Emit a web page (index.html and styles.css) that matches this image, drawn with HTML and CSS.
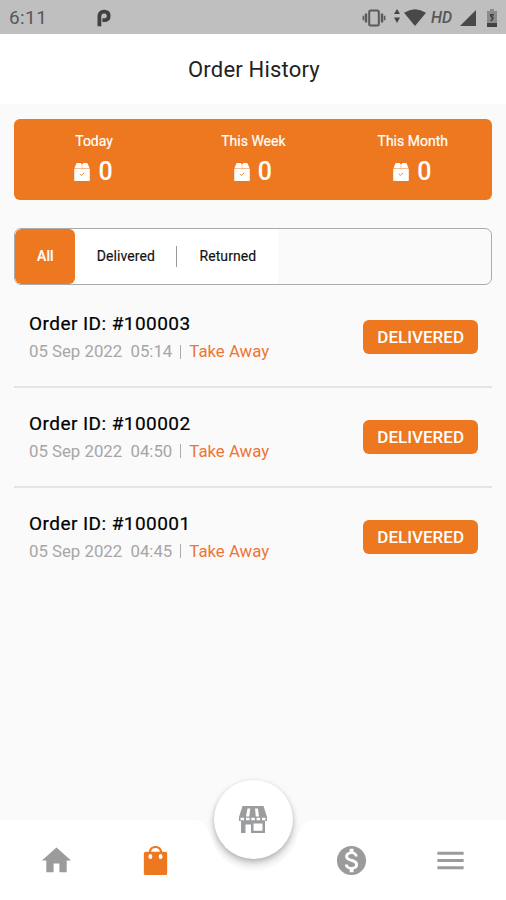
FILE: index.html
```html
<!DOCTYPE html>
<html lang="en">
<head>
<meta charset="utf-8">
<title>Order History</title>
<link rel="stylesheet" href="styles.css">
</head>
<body>
<svg class="defs" width="0" height="0">
  <symbol id="box" viewBox="0 0 16 18">
    <path fill="#fff" d="M3.500 0H7v5.600H.4L2 1.200Q2.400 0 3.500 0zM9 0h3.500q1.100 0 1.500 1.200l1.600 4.400H9zM7.200 1h1.600v4.600H7.200zM.2 6.100h15.600v11.200q0 .7-.7.700H.9q-.7 0-.7-.700z"/>
    <path fill="none" stroke="#ee7820" stroke-width=".9" d="M5.800 11l1.600 1.400 2.800-2.600"/>
  </symbol>
</svg>
<div class="phone">
  <header class="status">
    <span class="clock">6:11</span>
    <svg class="p-icon" width="14" height="18" viewBox="0 0 14 18"><path fill="none" stroke="#414141" stroke-width="3.800" d="M2.400 17.300V7.500Q2.400 2.600 7.200 2.600Q11.700 2.600 11.700 6.700Q11.700 11.200 7 11.200H5.400"/></svg>
    <svg class="vibrate" width="24" height="18" viewBox="0 0 24 18"><g fill="none" stroke="#5a5a5a"><rect x="7.200" y="1.500" width="9.600" height="15" rx="1.500" stroke-width="2"/><path stroke-width="2.400" d="M4 4.500v9M20 4.500v9"/><path stroke-width="1.600" d="M1.400 6.800v4.400M22.600 6.800v4.400"/></g></svg>
    <svg class="arrows" width="6" height="14" viewBox="0 0 6 14"><path fill="#454545" d="M3 0l3 5H0zM0 8.500h6L3 14z"/></svg>
    <svg class="wifi" width="22" height="17" viewBox="0 0 22 17"><path fill="#484848" d="M0 3.800Q11-3.500 22 3.800L11 17z"/></svg>
    <span class="hd">HD</span>
    <svg class="signal" width="16" height="16" viewBox="0 0 16 16"><path fill="#484848" d="M16 0v16H0z"/></svg>
    <svg class="battery" width="10" height="18" viewBox="0 0 10 18"><path fill="#8b8b8b" d="M3 0h4v2h3v16H0V2h3z"/><path fill="#424242" d="M0 14h10v4H0zM3 5h4v1.500H5L7 9l-2 3H3l2-2.500L3 7z"/></svg>
  </header>
  <h1 class="title">Order History</h1>
  <main>
    <section class="summary">
      <div class="stat"><span class="stat-label">Today</span><div class="stat-value"><svg width="16" height="18"><use href="#box"/></svg><b>0</b></div></div>
      <div class="stat"><span class="stat-label">This Week</span><div class="stat-value"><svg width="16" height="18"><use href="#box"/></svg><b>0</b></div></div>
      <div class="stat"><span class="stat-label">This Month</span><div class="stat-value"><svg width="16" height="18"><use href="#box"/></svg><b>0</b></div></div>
    </section>
    <div class="tabs">
      <div class="active-wrap"><div class="tab active">All</div></div>
      <div class="tab delivered">Delivered</div>
      <div class="divider"></div>
      <div class="tab returned">Returned</div>
    </div>
    <section class="orders">
      <article class="order"><div><h2>Order ID: #100003</h2><p><span class="date">05 Sep 2022&nbsp; 05:14</span><i></i><span class="kind">Take Away</span></p></div><span class="badge">DELIVERED</span></article>
      <article class="order"><div><h2>Order ID: #100002</h2><p><span class="date">05 Sep 2022&nbsp; 04:50</span><i></i><span class="kind">Take Away</span></p></div><span class="badge">DELIVERED</span></article>
      <article class="order"><div><h2>Order ID: #100001</h2><p><span class="date">05 Sep 2022&nbsp; 04:45</span><i></i><span class="kind">Take Away</span></p></div><span class="badge">DELIVERED</span></article>
    </section>
  </main>
  <nav class="nav">
    <svg class="nav-bg" width="506" height="80" viewBox="0 0 506 80"><path fill="#fff" d="M0 0H192C202 0 208 6 211 16A44 44 0 0 0 297 16C300 6 306 0 316 0H506V80H0z"/></svg>
    <svg class="nav-icon" viewBox="0 0 24 24"><path fill="#9b9b9b" d="M10 20v-6h4v6h5v-8h3L12 3 2 12h3v8z"/></svg>
    <svg class="nav-icon" viewBox="0 0 24 24"><path fill="#ee7820" fill-rule="evenodd" d="M18.500 6H16.500C16.500 3.500 14.500 2 12 2S7.500 3.500 7.500 6H5.500C4.500 6 4 6.500 4 7.500v13c0 1 .5 1.500 1.500 1.500h13c1 0 1.500-.5 1.500-1.500v-13C20 6.500 19.500 6 18.500 6zM12 3.500c1.700 0 3 1 3 2.500H9c0-1.500 1.300-2.500 3-2.500zM8.500 7.500a1.300 1.700 0 0 1 0 3.500a1.300 1.700 0 0 1 0-3.500zM15.500 7.500a1.300 1.700 0 0 1 0 3.500a1.300 1.700 0 0 1 0-3.500z"/></svg>
    <div class="fab"><svg width="28" height="27" viewBox="0 0 28 27"><path fill="#9a9c9e" fill-rule="evenodd" d="M3.500 0h21L28 11v4h-2v12H12V18.500H6.500V27H2V15H0V11zM8.500 2.500L7 10.500h3.300l1-8zM16 2.500l.8 8h3.300L18.800 2.500zM14.500 17.500v7.200h9v-7.200z"/><path fill="#fff" d="M1.500 11.700h3.500v2.600H1.500zM7 11.700h3.500v2.600H7zM12.300 11.700h3.500v2.600h-3.500zM17.600 11.700h3.500v2.600h-3.500zM23 11.700h3.500v2.600H23z"/></svg></div>
    <svg class="nav-icon" viewBox="0 0 24 24"><path fill="#9b9b9b" d="M12 2C6.480 2 2 6.480 2 12s4.480 10 10 10 10-4.480 10-10S17.520 2 12 2zm1.410 16.090V20h-2.670v-1.930c-1.710-.36-3.160-1.460-3.270-3.400h1.960c.1 1.050.82 1.870 2.650 1.870 1.960 0 2.400-.98 2.400-1.590 0-.83-.44-1.610-2.670-2.140-2.480-.6-4.180-1.620-4.180-3.670 0-1.720 1.390-2.840 3.110-3.210V4h2.670v1.950c1.860.45 2.790 1.860 2.850 3.390H14.300c-.05-1.110-.64-1.870-2.220-1.870-1.500 0-2.400.68-2.400 1.640 0 .84.65 1.390 2.670 1.910s4.180 1.390 4.180 3.910c-.01 1.830-1.380 2.830-3.120 3.160z"/></svg>
    <svg class="nav-icon" viewBox="0 0 24 24"><path fill="#9b9b9b" d="M3 18h18v-2H3v2zm0-5h18v-2H3v2zm0-7v2h18V6H3z"/></svg>
  </nav>
</div>
</body>
</html>
```
FILE: styles.css
```css
* { box-sizing: border-box; }
body { margin: 0; font-family: Roboto, "Liberation Sans", sans-serif; }
h1, h2, p { margin: 0; font-weight: 400; }
svg { display: block; flex: none; }
.defs { position: absolute; }
.phone { width: 506px; height: 900px; display: flex; flex-direction: column; background: #fafafa; overflow: hidden; }
.status { height: 34px; background: #bfbfbf; display: flex; align-items: center; padding: 1px 9px 0; color: #585858; }
.clock { font-size: 19px; letter-spacing: 0.400px; width: 88px; line-height: 34px; padding-top: 1px; }
.vibrate { margin-left: auto; }
.arrows { margin: 0 0 3px 8px; }
.wifi { margin-left: 4px; }
.hd { margin-left: 5px; width: 21px; font-size: 16px; font-style: italic; font-weight: 500; }
.signal { margin-left: 8px; }
.battery { margin-left: 11px; }
.title { height: 70px; background: #fff; text-align: center; font-size: 22px; line-height: 71px; letter-spacing: 0.200px; color: #222; padding-left: 2px; }
main { flex: 1; padding: 15px 13.600px 0 14.400px; }
.summary { height: 81px; border-radius: 6px; background: #ee7820; display: grid; grid-template-columns: repeat(3, 1fr); color: #fff; }
.stat { display: flex; flex-direction: column; align-items: center; padding-top: 13px; }
.stat-label { font-size: 14px; line-height: 18px; font-weight: 400; -webkit-text-stroke: 0.200px #fff; }
.stat-value { display: flex; align-items: center; gap: 8px; height: 28px; margin-top: 8px; padding-right: 1px; }
.stat-value svg { margin-bottom: 1px; }
.stat-value b { font-size: 25px; font-weight: 500; line-height: 28px; }
.tabs { height: 57px; margin-top: 28px; border: 1px solid #aaa; border-radius: 7px; display: flex; align-items: center; overflow: hidden; font-size: 14px; color: #111; }
.tab { height: 55px; line-height: 54px; text-align: center; background: #fff; font-weight: 400; letter-spacing: 0.100px; -webkit-text-stroke: 0.150px currentColor; }
.active-wrap { background: #fff; }
.active { width: 60px; background: #ee7820; color: #fff; border-radius: 6px; font-weight: 500; }
.delivered { width: 101px; }
.returned { width: 101px; }
.divider { width: 1px; height: 55px; border: solid #fff; border-width: 17px 0; background: #999; }
.orders { padding-top: 3px; }
.order { height: 99.800px; border-bottom: 2px solid #e4e4e4; padding: 22px 14px 0 14.600px; display: flex; justify-content: space-between; }
.order:last-child { border: 0; }
.order h2 { font-size: 19px; line-height: 28px; font-weight: 400; letter-spacing: 0.450px; color: #000; -webkit-text-stroke: 0.200px #000; }
.order p { display: flex; align-items: center; font-size: 16.800px; line-height: 27px; color: #a6a6a6; }
.order i { width: 1px; height: 14px; background: #aaa; margin: 0 8px; }
.kind { color: #ee7535; }
.badge { width: 115.500px; height: 34px; margin-top: 10px; border-radius: 6px; background: #ee7820; color: #fff; text-align: center; line-height: 34px; font-size: 17px; font-weight: 500; }
.nav { position: relative; height: 80px; padding: 0 6.500px 0 7.500px; display: grid; grid-template-columns: repeat(5, 1fr); justify-items: center; align-items: center; }
.nav-bg { position: absolute; left: 0; top: 0; }
.nav-icon { width: 35px; height: 35px; position: relative; }
.fab { position: relative; top: -41px; width: 79px; height: 79px; border-radius: 50%; background: #fff; display: grid; place-items: center; box-shadow: 0 4px 7px rgba(0,0,0,.24), 0 1px 4px rgba(0,0,0,.1); }
```
